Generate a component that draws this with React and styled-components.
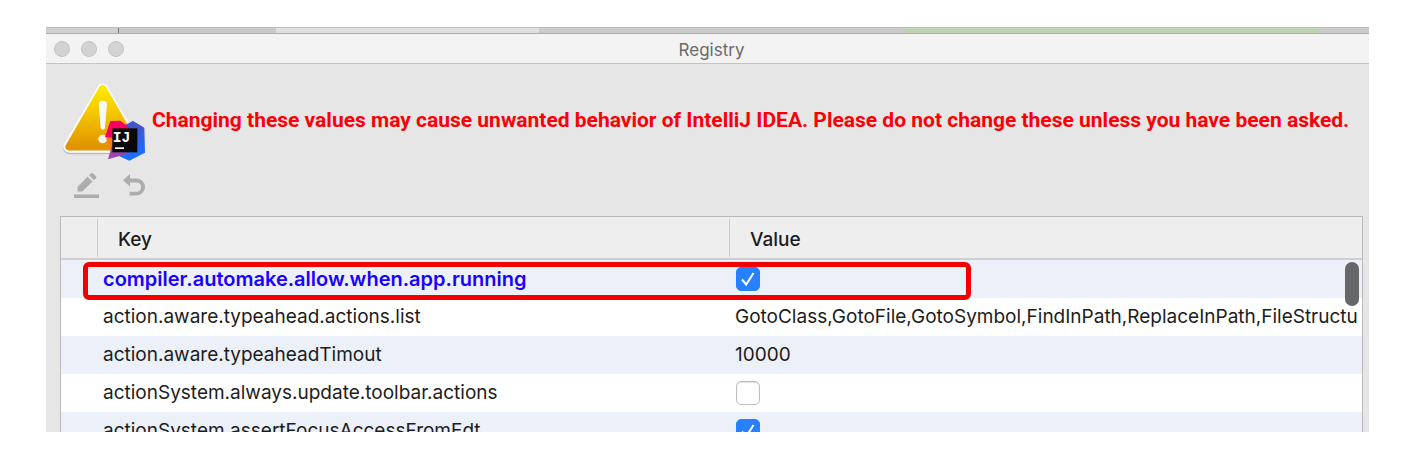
import React, { useState } from "react";
import styled, { createGlobalStyle } from "styled-components";

const GlobalStyle = createGlobalStyle`
  * { box-sizing: border-box; }
  body {
    margin: 0;
    background: #fff;
    color: #1c1c1c;
    font-family: Inter, "Liberation Sans", sans-serif;
    font-size: 19px;
    line-height: 24px;
  }
`;

const Page = styled.main`
  display: flex;
  height: 100vh;
  padding: 27px 37px 36px 46px;
`;

const Desktop = styled.div`
  flex: 1;
  min-width: 0;
  display: flex;
  flex-direction: column;
  overflow: hidden;
`;

const BackdropStrip = styled.div`
  flex: none;
  display: flex;
  height: 7px;
  border-top: 1px solid #bdbdbd;
  border-bottom: 1px solid #ababab;
`;

const Segment = styled.span`
  flex: ${(p) => p.$grow} 1 0;
  background: ${(p) => p.$color};
  border-right: ${(p) => (p.$divider ? "1px solid #777" : "0")};
`;

const Dialog = styled.section`
  flex: 1;
  min-height: 0;
  display: flex;
  flex-direction: column;
  background: #e6e6e6;
`;

const TitleBar = styled.header`
  flex: none;
  display: grid;
  grid-template-columns: 72px 1fr 72px;
  align-items: center;
  height: 30px;
  padding-left: 8px;
  background: #f3f3f3;
  border-bottom: 1px solid #c4c4c4;
`;

const Lights = styled.div`
  display: flex;
  gap: 11px;
`;

const Light = styled.button`
  flex: none;
  width: 16px;
  height: 16px;
  padding: 0;
  border: 1px solid #c3c3c3;
  border-radius: 50%;
  background: #d3d3d3;
`;

const Title = styled.h1`
  margin: 0;
  padding-top: 2px;
  color: #6a6a6a;
  font-size: 17px;
  font-weight: 400;
  text-align: center;
`;

const Banner = styled.div`
  flex: none;
  display: flex;
  align-items: center;
  gap: 6px;
  padding: 18px 0 0 16px;
`;

const WarningText = styled.p`
  margin: 0;
  padding-bottom: 4px;
  color: #fb0007;
  font-family: Roboto, "Liberation Sans", sans-serif;
  font-size: 21px;
  font-weight: 700;
  white-space: nowrap;
`;

const Toolbar = styled.div`
  flex: none;
  display: flex;
  gap: 20px;
  height: 54px;
  padding: 10px 0 0 26px;
`;

const ToolButton = styled.button`
  display: flex;
  width: 28px;
  height: 28px;
  padding: 0;
  border: 0;
  background: none;
`;

const TableViewport = styled.div`
  position: relative;
  flex: 1;
  min-height: 0;
  margin: 0 6px 0 14px;
  overflow: hidden;
  background: #fff;
  border: 1px solid #b9b9b9;
  border-bottom: 0;
`;

const Table = styled.table`
  width: 100%;
  table-layout: fixed;
  border-collapse: separate;
  border-spacing: 0;
`;

const GutterCol = styled.col`
  width: 36px;
`;

const KeyCol = styled.col`
  width: 632px;
`;

const HeadCell = styled.th`
  height: 43px;
  padding: 4px 0 0 21px;
  text-align: left;
  font-weight: 500;
  border-bottom: 2px solid #cfcfcf;
  background: ${(p) =>
    p.$first
      ? "#eee"
      : "linear-gradient(#cbcbcb, #cbcbcb) 0 2px / 1px 38px no-repeat #eee"};
`;

const Row = styled.tr`
  background: #fff;
  &:nth-child(odd) {
    background: #ebf0f9;
  }
`;

const Cell = styled.td`
  height: 38px;
  padding: 0 0 0 6px;
  overflow: hidden;
  white-space: nowrap;
  color: ${(p) => (p.$changed ? "#1a00ff" : "inherit")};
  font-size: ${(p) => (p.$changed ? "20px" : "19px")};
  font-weight: ${(p) => (p.$changed ? 600 : 400)};
`;

const Check = styled.input`
  appearance: none;
  display: block;
  width: 24px;
  height: 24px;
  margin: 0 0 0 1px;
  border: 1px solid #bdbdbd;
  border-radius: 5px;
  background: #fff;
  box-shadow: inset 0 1px 1px #ddd;
  &:checked {
    border-color: #2680ff;
    box-shadow: none;
    background: #2680ff
      url("data:image/svg+xml,%3Csvg xmlns='http://www.w3.org/2000/svg' viewBox='0 0 22 22'%3E%3Cpath d='M5 11.5l4.2 5L16.500 5' fill='none' stroke='white' stroke-width='2'/%3E%3C/svg%3E")
      center / 22px no-repeat;
  }
`;

const Highlight = styled.div`
  position: absolute;
  top: 45px;
  left: 22px;
  width: 888px;
  height: 38px;
  border: 5px solid #f20000;
  border-radius: 6px;
  pointer-events: none;
`;

const ScrollThumb = styled.div`
  position: absolute;
  top: 45px;
  right: 3px;
  width: 14px;
  height: 44px;
  border-radius: 7px;
  background: #666769;
`;

const LogoText = styled.text`
  font-family: "Liberation Mono", monospace;
  font-size: 44px;
  font-weight: 700;
  fill: #fff;
`;

function WarningIcon() {
  return (
    <svg width="84" height="80" viewBox="36 20 252 240" aria-hidden="true">
      <defs>
        <linearGradient id="sign" x1="0" y1="0" x2="0" y2="1">
          <stop offset="0" stopColor="#ffe600" />
          <stop offset="0.45" stopColor="#f4c400" />
          <stop offset="1" stopColor="#e09400" />
        </linearGradient>
        <linearGradient id="hex" x1="0" y1="0" x2="0" y2="1">
          <stop offset="0" stopColor="#3f58d8" />
          <stop offset="0.5" stopColor="#2c62ee" />
          <stop offset="1" stopColor="#1674ff" />
        </linearGradient>
      </defs>
      <path d="M158 41 L58 218 H258 Z" fill="#bcbcbc" stroke="#bcbcbc" strokeWidth="37" strokeLinejoin="round" />
      <path d="M158 41 L58 214 H258 Z" fill="#fff" stroke="#fafafa" strokeWidth="36" strokeLinejoin="round" />
      <path d="M158 41 L58 214 H258 Z" fill="url(#sign)" stroke="url(#sign)" strokeWidth="23" strokeLinejoin="round" />
      <path d="M146 86 Q146 76 158 76 Q171 76 171 86 L165 157 Q163 163 158 163 Q153 163 152 157 Z" fill="#f8f8f8" />
      <circle cx="158" cy="191" r="13" fill="#f3f3f3" />
      <path d="M248 137 L283 157 L285 232 L238 256 L200 239 L205 160 Z" fill="url(#hex)" />
      <path d="M248 137 L277 154 L266 190 L232 160 Z" fill="#4055c8" />
      <path d="M166 183 L202 180 V221 L181 220 Z" fill="#ff7a16" />
      <path d="M181 137 L211 136 L250 166 L220 190 L165 185 Z" fill="#f7005d" />
      <path d="M187 207 L174 252 L230 236 L225 207 Z" fill="#9b46aa" />
      <path d="M187 159 H262 V231 H187 Z" fill="#08090a" />
      <LogoText x="188" y="200">IJ</LogoText>
      <rect x="195" y="216" width="27" height="5" fill="#fff" />
    </svg>
  );
}

function PencilIcon() {
  return (
    <svg width="28" height="28" viewBox="0 0 28 28" fill="#adadad" aria-hidden="true">
      <path d="M2 22.500H27V26H2Z" />
      <path d="M5.500 19.500V15L15.500 4.800L20.500 9.500L10.300 19.500Z" />
      <path d="M17 3.300L19 1.300Q20 0.500 21 1.300L24 4.200Q24.800 5.200 24 6.200L22 8.200Z" />
    </svg>
  );
}

function UndoIcon() {
  return (
    <svg width="28" height="28" viewBox="0 0 28 28" aria-hidden="true">
      <path d="M3 8.300L10 2V14.600Z" fill="#adadad" />
      <path d="M9.500 8.500H16.500A6.600 6.600 0 0 1 16.500 21.700H9.500" fill="none" stroke="#adadad" strokeWidth="3.800" />
    </svg>
  );
}

const segments = [
  { grow: 72, color: "#cfcfcf", divider: true },
  { grow: 157, color: "#c9c9c9" },
  { grow: 263, color: "#e0e0e0" },
  { grow: 365, color: "#cbcbcb" },
  { grow: 418, color: "#c0d1b6" },
  { grow: 47, color: "#cbcbcb" },
];

const initialEntries = [
  { key: "compiler.automake.allow.when.app.running", value: true, changed: true },
  {
    key: "action.aware.typeahead.actions.list",
    value: "GotoClass,GotoFile,GotoSymbol,FindInPath,ReplaceInPath,FileStructu",
  },
  { key: "action.aware.typeaheadTimout", value: "10000" },
  { key: "actionSystem.always.update.toolbar.actions", value: false },
  { key: "actionSystem.assertFocusAccessFromEdt", value: true },
];

export default function App() {
  const [entries, setEntries] = useState(initialEntries);
  const toggle = (key) =>
    setEntries((list) =>
      list.map((e) => (e.key === key ? { ...e, value: !e.value } : e))
    );

  return (
    <Page>
      <GlobalStyle />
      <Desktop>
        <BackdropStrip>
          {segments.map((s, i) => (
            <Segment key={i} $grow={s.grow} $color={s.color} $divider={s.divider} />
          ))}
        </BackdropStrip>
        <Dialog>
          <TitleBar>
            <Lights>
              <Light aria-label="Close" />
              <Light aria-label="Minimize" />
              <Light aria-label="Zoom" />
            </Lights>
            <Title>Registry</Title>
          </TitleBar>
          <Banner>
            <WarningIcon />
            <WarningText>
              Changing these values may cause unwanted behavior of IntelliJ IDEA. Please do not
              change these unless you have been asked.
            </WarningText>
          </Banner>
          <Toolbar>
            <ToolButton aria-label="Edit value">
              <PencilIcon />
            </ToolButton>
            <ToolButton aria-label="Restore default">
              <UndoIcon />
            </ToolButton>
          </Toolbar>
          <TableViewport>
            <Table>
              <colgroup>
                <GutterCol />
                <KeyCol />
                <col />
              </colgroup>
              <thead>
                <tr>
                  <HeadCell $first />
                  <HeadCell>Key</HeadCell>
                  <HeadCell>Value</HeadCell>
                </tr>
              </thead>
              <tbody>
                {entries.map((e) => (
                  <Row key={e.key}>
                    <Cell />
                    <Cell id={e.key} $changed={e.changed}>
                      {e.key}
                    </Cell>
                    <Cell>
                      {typeof e.value === "boolean" ? (
                        <Check
                          type="checkbox"
                          aria-labelledby={e.key}
                          checked={e.value}
                          onChange={() => toggle(e.key)}
                        />
                      ) : (
                        e.value
                      )}
                    </Cell>
                  </Row>
                ))}
              </tbody>
            </Table>
            <Highlight />
            <ScrollThumb />
          </TableViewport>
        </Dialog>
      </Desktop>
    </Page>
  );
}
